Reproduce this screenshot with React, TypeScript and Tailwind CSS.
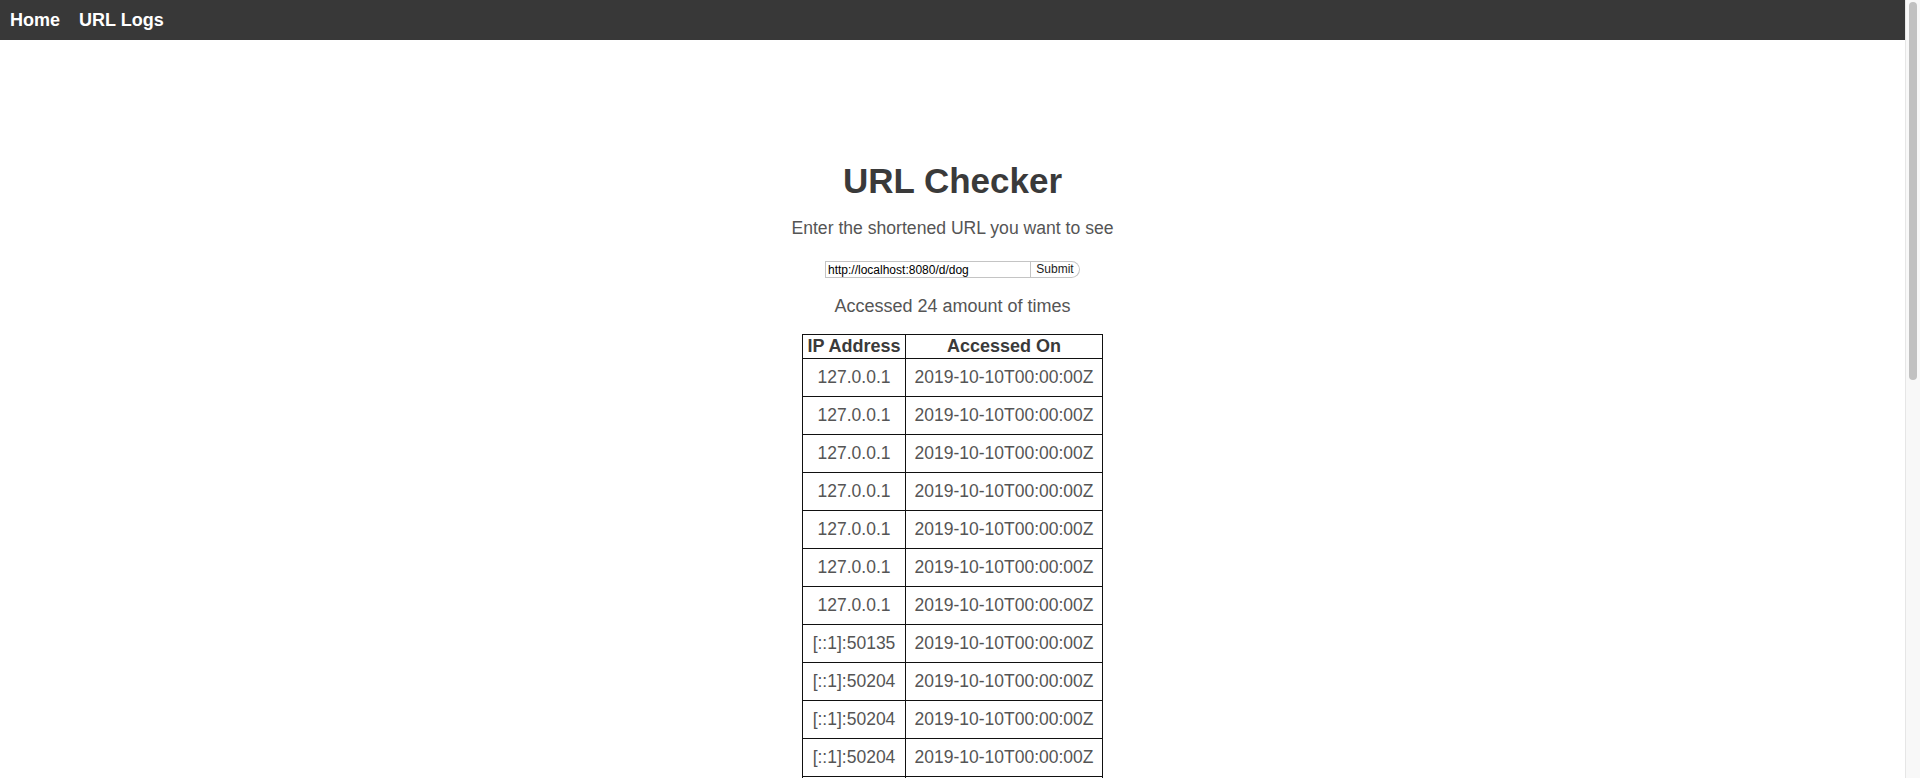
import React from 'react'

const ips = [
  '127.0.0.1',
  '127.0.0.1',
  '127.0.0.1',
  '127.0.0.1',
  '127.0.0.1',
  '127.0.0.1',
  '127.0.0.1',
  '[::1]:50135',
  '[::1]:50204',
  '[::1]:50204',
  '[::1]:50204',
  '[::1]:50204',
  '[::1]:50204',
  '[::1]:50204',
  '[::1]:50204',
  '[::1]:50204',
  '[::1]:50204',
  '[::1]:50204',
  '[::1]:50204',
  '[::1]:50204',
  '[::1]:50204',
  '[::1]:50204',
  '[::1]:50204',
  '[::1]:50204',
]

export default function App() {
  return (
    <div className="min-h-screen bg-white pb-[330px] pr-[15px] font-['Liberation_Sans',Arial,sans-serif] text-[#3c3c3c]">
      {/* Top nav */}
      <nav className="flex h-10 items-center gap-[19px] bg-[#383838] pl-[10px]">
        <a className="text-[18px] font-bold text-white">Home</a>
        <a className="text-[18px] font-bold text-white">URL Logs</a>
      </nav>

      <main className="flex flex-col items-center">
        <h1 className="mt-[120px] text-[35px] font-bold leading-[42px] text-[#3a3a3a]">URL Checker</h1>
        <p className="mt-[15px] text-[17.6px] leading-[22px] text-[#555]">
          Enter the shortened URL you want to see
        </p>

        <form className="mt-[22px] flex items-stretch" onSubmit={(e) => e.preventDefault()}>
          <input
            defaultValue="http://localhost:8080/d/dog"
            className="h-[17px] w-[206px] border border-[#c4c4c4] px-[2px] text-[12px] leading-[15px] text-black outline-none"
          />
          <button className="h-[17px] w-[49px] rounded-r-[9px] border border-l-0 border-[#c4c4c4] bg-white text-[12px] leading-[15px] text-[#222]">
            Submit
          </button>
        </form>

        <p className="mt-[17px] text-[18px] leading-[22px] text-[#555]">Accessed 24 amount of times</p>

        <table className="mt-[17px] w-[301px] border-collapse border border-[#111] text-[17.5px]">
          <thead>
            <tr>
              <th className="h-[24px] w-[103px] border border-[#111] px-1 py-0 text-[18px] font-bold leading-[21px] text-[#3a3a3a]">
                IP Address
              </th>
              <th className="h-[24px] border border-[#111] px-1 py-0 text-[18px] font-bold leading-[21px] text-[#3a3a3a]">
                Accessed On
              </th>
            </tr>
          </thead>
          <tbody>
            {ips.map((ip, i) => (
              <tr key={i}>
                <td className="h-[38px] border border-[#111] px-1 text-center leading-[21px] text-[#555]">{ip}</td>
                <td className="h-[38px] border border-[#111] px-1 text-center leading-[21px] text-[#555]">
                  2019-10-10T00:00:00Z
                </td>
              </tr>
            ))}
          </tbody>
        </table>
      </main>

      {/* window scrollbar */}
      <div className="fixed right-0 top-0 flex h-screen w-[15px] justify-center border-l border-[#e6e6e6] bg-[#f8f8f8] pt-[2px]">
        <div className="h-[378px] w-[8px] rounded-full bg-[#c1c1c1]" />
      </div>
    </div>
  )
}
